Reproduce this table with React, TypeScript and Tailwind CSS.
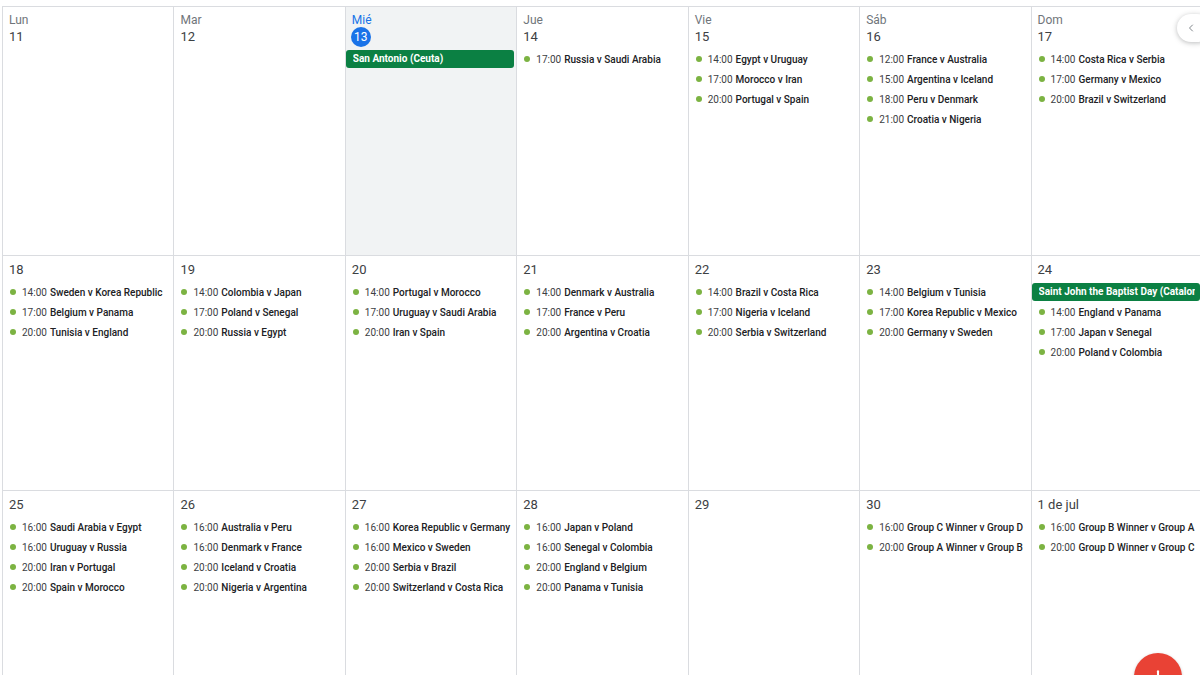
import React from "react";
import { ChevronLeft, Plus } from "lucide-react";

type Ev = { time?: string; title: string; allDay?: boolean };
type Day = { name?: string; num: string; today?: boolean; events: Ev[] };

const m = (time: string, title: string): Ev => ({ time, title });

const weeks: Day[][] = [
  [
    { name: "Lun", num: "11", events: [] },
    { name: "Mar", num: "12", events: [] },
    { name: "Mié", num: "13", today: true, events: [{ title: "San Antonio (Ceuta)", allDay: true }] },
    { name: "Jue", num: "14", events: [m("17:00", "Russia v Saudi Arabia")] },
    {
      name: "Vie",
      num: "15",
      events: [m("14:00", "Egypt v Uruguay"), m("17:00", "Morocco v Iran"), m("20:00", "Portugal v Spain")],
    },
    {
      name: "Sáb",
      num: "16",
      events: [
        m("12:00", "France v Australia"),
        m("15:00", "Argentina v Iceland"),
        m("18:00", "Peru v Denmark"),
        m("21:00", "Croatia v Nigeria"),
      ],
    },
    {
      name: "Dom",
      num: "17",
      events: [m("14:00", "Costa Rica v Serbia"), m("17:00", "Germany v Mexico"), m("20:00", "Brazil v Switzerland")],
    },
  ],
  [
    { num: "18", events: [m("14:00", "Sweden v Korea Republic"), m("17:00", "Belgium v Panama"), m("20:00", "Tunisia v England")] },
    { num: "19", events: [m("14:00", "Colombia v Japan"), m("17:00", "Poland v Senegal"), m("20:00", "Russia v Egypt")] },
    { num: "20", events: [m("14:00", "Portugal v Morocco"), m("17:00", "Uruguay v Saudi Arabia"), m("20:00", "Iran v Spain")] },
    { num: "21", events: [m("14:00", "Denmark v Australia"), m("17:00", "France v Peru"), m("20:00", "Argentina v Croatia")] },
    { num: "22", events: [m("14:00", "Brazil v Costa Rica"), m("17:00", "Nigeria v Iceland"), m("20:00", "Serbia v Switzerland")] },
    { num: "23", events: [m("14:00", "Belgium v Tunisia"), m("17:00", "Korea Republic v Mexico"), m("20:00", "Germany v Sweden")] },
    {
      num: "24",
      events: [
        { title: "Saint John the Baptist Day (Catalonia)", allDay: true },
        m("14:00", "England v Panama"),
        m("17:00", "Japan v Senegal"),
        m("20:00", "Poland v Colombia"),
      ],
    },
  ],
  [
    {
      num: "25",
      events: [m("16:00", "Saudi Arabia v Egypt"), m("16:00", "Uruguay v Russia"), m("20:00", "Iran v Portugal"), m("20:00", "Spain v Morocco")],
    },
    {
      num: "26",
      events: [m("16:00", "Australia v Peru"), m("16:00", "Denmark v France"), m("20:00", "Iceland v Croatia"), m("20:00", "Nigeria v Argentina")],
    },
    {
      num: "27",
      events: [
        m("16:00", "Korea Republic v Germany"),
        m("16:00", "Mexico v Sweden"),
        m("20:00", "Serbia v Brazil"),
        m("20:00", "Switzerland v Costa Rica"),
      ],
    },
    {
      num: "28",
      events: [m("16:00", "Japan v Poland"), m("16:00", "Senegal v Colombia"), m("20:00", "England v Belgium"), m("20:00", "Panama v Tunisia")],
    },
    { num: "29", events: [] },
    { num: "30", events: [m("16:00", "Group C Winner v Group D"), m("20:00", "Group A Winner v Group B")] },
    { num: "1 de jul", events: [m("16:00", "Group B Winner v Group A"), m("20:00", "Group D Winner v Group C")] },
  ],
];

const rowHeights = ["h-[249px]", "h-[235px]", "h-[235px]"];

const EventRow = ({ ev }: { ev: Ev }) => {
  if (ev.allDay) {
    return (
      <div className="h-[20px] py-[1px] pr-[2px]">
        <div className="h-[18px] bg-[#0b8043] rounded-[3px] pl-[7px] pr-[5px] text-white text-[10px] font-bold leading-[18px] whitespace-nowrap overflow-hidden">
          <div className="overflow-hidden">{ev.title}</div>
        </div>
      </div>
    );
  }
  return (
    <div className="h-[20px] flex items-center pl-[7px] whitespace-nowrap overflow-hidden text-[10px] text-[#3c4043]">
      <span className="w-[6px] h-[6px] rounded-full bg-[#7cb342] mr-[6px] shrink-0" />
      <span>{ev.time}</span>
      <span className="ml-[3px] font-medium text-[#202124]">{ev.title}</span>
    </div>
  );
};

const DayCell = ({ day, h }: { day: Day; h: string }) => (
  <div className={`${h} border-r border-b border-[#dadce0] overflow-hidden ${day.today ? "bg-[#f1f3f4]" : "bg-white"}`}>
    <div className="pt-[5px]">
      {day.name && (
        <div className={`h-[16px] leading-[16px] pl-[6px] text-[12px] ${day.today ? "text-[#1a73e8]" : "text-[#70757a]"}`}>
          {day.name}
        </div>
      )}
      <div className="h-[18px] flex items-center pl-[6px] text-[13px] text-[#3c4043]">
        {day.today ? (
          <span className="w-[20px] h-[20px] -ml-px rounded-full bg-[#1a73e8] text-white flex items-center justify-center text-[12px]">
            {day.num}
          </span>
        ) : (
          <span>{day.num}</span>
        )}
      </div>
    </div>
    <div className="mt-[3px]">
      {day.events.map((ev, i) => (
        <EventRow key={i} ev={ev} />
      ))}
    </div>
  </div>
);

export default function App() {
  return (
    <div className="relative w-[1200px] h-[675px] overflow-hidden bg-white font-['Roboto','Liberation_Sans',sans-serif]">
      <div className="pt-[6px] pl-[2px]">
        <div className="w-[1201px] border-l border-t border-[#dadce0]">
          {weeks.map((week, wi) => (
            <div key={wi} className="grid grid-cols-7">
              {week.map((day) => (
                <DayCell key={day.num} day={day} h={rowHeights[wi]} />
              ))}
            </div>
          ))}
        </div>
      </div>

      {/* side panel toggle */}
      <div className="absolute left-[1177px] top-[14px] w-[34px] h-[28px] rounded-full bg-white shadow-[0_1px_5px_rgba(60,64,67,0.35)] flex items-center pl-[8px]">
        <ChevronLeft className="w-[12px] h-[12px] text-[#80868b]" strokeWidth={2} />
      </div>

      {/* create button */}
      <div className="absolute left-[1134px] top-[653px] w-[48px] h-[48px] rounded-full bg-[#e94235] shadow-[0_1px_3px_rgba(60,64,67,0.3)] flex items-center justify-center">
        <Plus className="w-[20px] h-[20px] text-white" strokeWidth={2.5} />
      </div>
    </div>
  );
}
